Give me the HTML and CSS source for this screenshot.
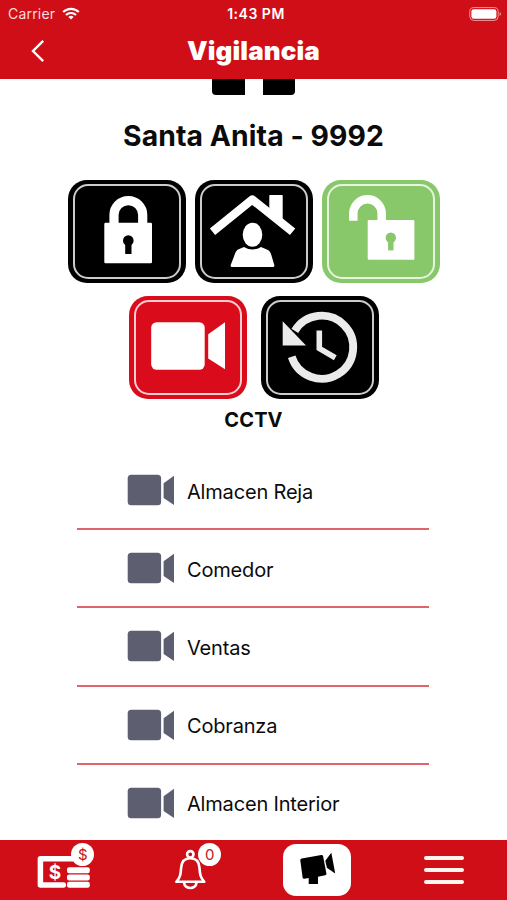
FILE: index.html
```html
<!DOCTYPE html>
<html lang="es">
<head>
  <meta charset="utf-8">
  <title>Vigilancia</title>
  <link rel="stylesheet" href="styles.css">
</head>
<body>
  <header class="header">
    <div class="status-bar">
      <div class="carrier">
        <span>Carrier</span>
        <svg width="18" height="13" viewBox="0 0 18 13" fill="none" stroke="#fff" stroke-width="2.1">
          <path d="M1.2 5.1a11 11 0 0 1 15.6 0M4 8.1a7 7 0 0 1 10 0"/>
          <path d="M9 12.6 6.4 10a3.7 3.7 0 0 1 5.2 0z" fill="#fff" stroke="none"/>
        </svg>
      </div>
      <div class="clock">1:43 PM</div>
      <svg class="battery" width="33" height="14" viewBox="0 0 33 14">
        <rect x=".8" y=".6" width="28.4" height="12.8" rx="4" fill="none" stroke="#ee9a9d" stroke-width="1"/>
        <rect x="2.4" y="2.2" width="25" height="9.6" rx="2.4" fill="#fff"/>
        <path d="M30.6 5v4q1.4-.6 1.4-2t-1.4-2z" fill="#ee9a9d"/>
      </svg>
    </div>
    <div class="title-bar">
      <svg class="back" width="14" height="24" viewBox="0 0 14 24" fill="none" stroke="#fff" stroke-width="2.4">
        <path d="M12.2 1.8 2 12l10.2 10.2"/>
      </svg>
      <h1>Vigilancia</h1>
    </div>
  </header>

  <main class="content">
    <!-- bottom of the building logo, scrolled under the header -->
    <div class="building">
      <span class="leg leg-left"></span>
      <span class="leg leg-right"></span>
    </div>

    <h2 class="branch">Santa Anita - 9992</h2>

    <div class="actions">
      <button class="action">
        <svg viewBox="0 0 118 103">
          <path d="M46 45V35a14.3 14.3 0 0 1 28.7 0v10" fill="none" stroke="#fff" stroke-width="9.2"/>
          <rect x="36.3" y="42.7" width="47.7" height="40.5" rx="1.2" fill="#fff"/>
          <circle cx="60.3" cy="60.6" r="5.3"/>
          <rect x="57.2" y="62" width="6.3" height="12"/>
        </svg>
      </button>
      <button class="action">
        <svg viewBox="0 0 118 103">
          <path d="M74.3 15.7q0-.7.7-.7h12q.7 0 .7.7V44L74.3 34z" fill="#fff"/>
          <path d="M17.5 51.8 57.3 19.6l40.3 32.2" fill="none" stroke="#fff" stroke-width="8.4" stroke-linejoin="round"/>
          <ellipse cx="57.5" cy="54.7" rx="9.8" ry="12" fill="#fff"/>
          <path d="M49 66.9q8.5 5 17 0l7 3.1q2 1 3 4l3.300 11q.4 2-1.300 2H37q-1.700 0-1.300-2l3.300-8.500q1.500-5.500 4-7z" fill="#fff"/>
        </svg>
      </button>
      <button class="action action-green">
        <svg viewBox="0 0 118 103">
          <path d="M31.3 40.7v-7.200a14.2 14.2 0 0 1 28.4 0V43" fill="none" stroke="#fff" stroke-width="8.5"/>
          <rect x="45.7" y="40" width="46.7" height="39.8" rx="1" fill="#fff"/>
          <circle cx="68.8" cy="57.8" r="5.2" fill="#88c76a"/>
          <rect x="66.1" y="59" width="5.4" height="11.4" fill="#88c76a"/>
        </svg>
      </button>
    </div>
    <div class="actions actions-second">
      <button class="action action-red">
        <svg viewBox="0 0 118 103" fill="#fff">
          <rect x="22.2" y="26.2" width="53.5" height="47.6" rx="5.5"/>
          <path d="M79.2 38.3 96 26.3v47L79.2 62.4z"/>
        </svg>
      </button>
      <button class="action">
        <svg viewBox="0 0 118 103">
          <path d="M30.7 60.8A31.5 31.5 0 1 0 33.8 34.9" fill="none" stroke="#ebebeb" stroke-width="7.8"/>
          <path d="M21.7 25.2v24.4H45z" fill="#ebebeb"/>
          <path d="M58.3 34.5v18l16 9.2" fill="none" stroke="#ebebeb" stroke-width="5.6"/>
        </svg>
      </button>
    </div>

    <h3 class="section">CCTV</h3>

    <ul class="cameras">
      <li class="camera">
        <svg width="48" height="32" viewBox="0 0 48 32"><use href="#cam"/></svg>
        <span>Almacen Reja</span>
      </li>
      <li class="camera">
        <svg width="48" height="32" viewBox="0 0 48 32"><use href="#cam"/></svg>
        <span>Comedor</span>
      </li>
      <li class="camera">
        <svg width="48" height="32" viewBox="0 0 48 32"><use href="#cam"/></svg>
        <span>Ventas</span>
      </li>
      <li class="camera">
        <svg width="48" height="32" viewBox="0 0 48 32"><use href="#cam"/></svg>
        <span>Cobranza</span>
      </li>
      <li class="camera">
        <svg width="48" height="32" viewBox="0 0 48 32"><use href="#cam"/></svg>
        <span>Almacen Interior</span>
      </li>
    </ul>
  </main>

  <nav class="tabs">
    <div class="tab">
      <div class="tab-icon">
        <svg width="70" height="60" viewBox="0 0 70 60">
          <path d="M47 18.8H12.4V45h23" fill="none" stroke="#fff" stroke-width="5.5" stroke-linejoin="round" stroke-linecap="round"/>
          <text class="bill-sign" x="27" y="38.8" text-anchor="middle">$</text>
          <g fill="#fff">
            <rect x="39" y="27.2" width="22.8" height="6" rx="2.2"/>
            <rect x="39" y="34.5" width="22.8" height="6" rx="2.2"/>
            <rect x="39" y="41.8" width="22.8" height="6" rx="2.2"/>
          </g>
        </svg>
        <span class="badge">$</span>
      </div>
    </div>
    <div class="tab">
      <div class="tab-icon">
        <svg width="70" height="60" viewBox="0 0 70 60" fill="none" stroke="#fff" stroke-width="2.6">
          <circle cx="35.3" cy="14.3" r="3.2"/>
          <path d="M35.3 18.3c-5.8 0-8.800 4-9.200 9.500-.4 6.500-.8 10-4.800 14h28c-4-4-4.400-7.500-4.800-14-.4-5.500-3.400-9.500-9.200-9.500z" stroke-linejoin="round"/>
          <path d="M29 42.500c.8 7.300 11.800 7.300 12.600 0"/>
        </svg>
        <span class="badge">0</span>
      </div>
    </div>
    <div class="tab">
      <div class="tab-active">
        <svg width="68" height="52" viewBox="0 0 68 52">
          <path d="M18.800 14.400 38.300 11q1.500-.3 1.800 1.200l3.300 17.200q.3 1.500-1.200 1.900L35 32.800V40h-9.300v-6l-4.300.8q-1.500.2-1.800-1.300l-2.300-17.300q-.1-1.500 1.500-1.800z"/>
          <path d="m42.300 16.700 6-8 3.900 20.900-8.300-5.800z"/>
        </svg>
      </div>
    </div>
    <div class="tab">
      <div class="menu">
        <span></span>
        <span></span>
        <span></span>
      </div>
    </div>
  </nav>

  <svg width="0" height="0" class="symbols">
    <symbol id="cam" viewBox="0 0 48 32">
      <rect x=".7" y=".7" width="33.4" height="30.6" rx="3.5"/>
      <path d="M36.600 9.300 47 1.700v29.200l-10.400-7z"/>
    </symbol>
  </svg>
</body>
</html>
```

FILE: styles.css
```css
* {
  box-sizing: border-box;
}

body {
  margin: 0;
  height: 900px;
  display: flex;
  flex-direction: column;
  overflow: hidden;
  background: #fff;
  color: #0b0b0c;
  font-family: Inter, sans-serif;
}

h1, h2, h3, ul {
  margin: 0;
  padding: 0;
}

.header {
  flex: none;
  height: 79px;
  background: #d00e17;
  color: #fff;
}

.status-bar {
  display: grid;
  grid-template-columns: 1fr auto 1fr;
  align-items: center;
  height: 27px;
  padding: 0 5px 0 8px;
}

.carrier {
  display: flex;
  align-items: center;
  gap: 7px;
  font-size: 14px;
  letter-spacing: 0.2px;
  color: #fbdcdd;
}

.clock {
  font-size: 14px;
  font-weight: 600;
  letter-spacing: 0.5px;
  padding-left: 2px;
}

.battery {
  justify-self: end;
}

.title-bar {
  display: grid;
  grid-template-columns: 60px 1fr 60px;
  align-items: center;
  height: 47px;
}

.back {
  margin-left: 31px;
}

.title-bar h1 {
  font-size: 26px;
  font-weight: 900;
  line-height: 30px;
  letter-spacing: 0.1px;
  text-align: center;
}

.content {
  flex: 1;
  min-height: 0;
  overflow: hidden;
}

.building {
  display: flex;
  justify-content: center;
  gap: 18px;
  height: 16px;
}

.leg {
  width: 32.5px;
  background: #000;
}

.leg-left {
  border-bottom-left-radius: 4px;
}

.leg-right {
  border-bottom-right-radius: 4px;
}

.branch {
  margin-top: 23px;
  font-size: 28.3px;
  font-weight: 650;
  line-height: 36px;
  letter-spacing: 0.1px;
  text-align: center;
}

.actions {
  display: flex;
  justify-content: center;
  gap: 9px;
  margin-top: 26px;
}

.actions-second {
  gap: 14px;
  margin-top: 13px;
}

.action {
  position: relative;
  width: 118px;
  height: 103px;
  padding: 0;
  border: 0;
  border-radius: 19px;
  background: #000;
}

/* thin white frame inside the button */
.action::after {
  content: "";
  position: absolute;
  inset: 4px 5px;
  border: 2px solid rgba(255, 255, 255, 0.8);
  border-radius: 15px;
}

.action svg {
  display: block;
  width: 118px;
  height: 103px;
}

.action-green {
  background: #88c76a;
}

.action-red {
  background: #da0b1b;
}

.section {
  margin-top: 8px;
  font-size: 20px;
  font-weight: 750;
  line-height: 27px;
  letter-spacing: 0.1px;
  text-align: center;
}

.cameras {
  width: 352px;
  margin: 18px auto 0 77px;
  list-style: none;
}

.camera {
  display: flex;
  align-items: center;
  gap: 12px;
  height: 78.2px;
  padding-left: 50px;
  border-bottom: 2px solid #e0646b;
  font-size: 20px;
  letter-spacing: -0.18px;
}

.camera span {
  padding-top: 3px;
}

.camera svg {
  fill: #5d5f71;
}

.tabs {
  flex: none;
  display: grid;
  grid-template-columns: repeat(4, 1fr);
  height: 60px;
  background: #d00e17;
}

.tab {
  display: flex;
  align-items: center;
  justify-content: center;
}

.tab-icon {
  position: relative;
  width: 70px;
  height: 60px;
}

.bill-sign {
  font-size: 19px;
  font-weight: 700;
  fill: #fff;
}

.badge {
  position: absolute;
  top: 2.5px;
  left: 43px;
  width: 23px;
  height: 23px;
  border-radius: 50%;
  background: #fff;
  color: #c4161e;
  font-size: 15px;
  line-height: 23px;
  text-align: center;
}

.tab-active {
  width: 68px;
  height: 52px;
  border-radius: 13px;
  background: #fff;
}

.menu {
  display: flex;
  flex-direction: column;
  gap: 8px;
  width: 40px;
}

.menu span {
  height: 3.7px;
  border-radius: 2px;
  background: #fff4ee;
}

.symbols {
  position: absolute;
}
```
